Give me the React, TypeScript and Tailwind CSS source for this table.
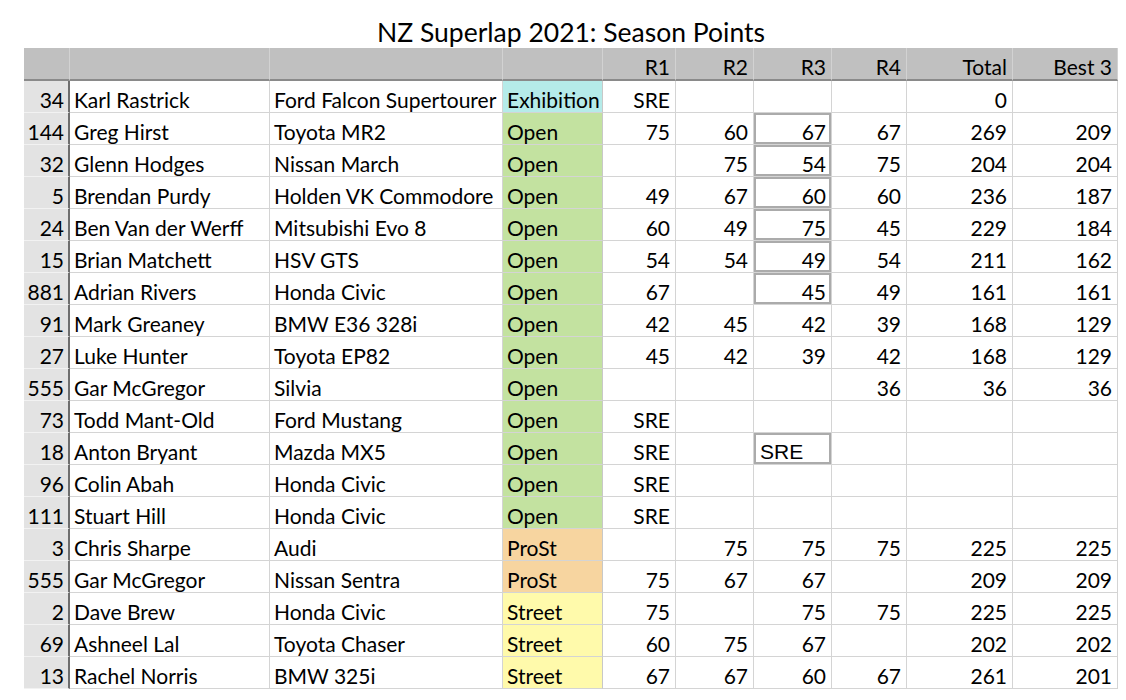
import React from "react";

type Row = {
  no: string;
  name: string;
  car: string;
  cls: "Exhibition" | "Open" | "ProSt" | "Street";
  r: string[];
  total: string;
  best: string;
};

const ROWS: Row[] = [
  { no: "34", name: "Karl Rastrick", car: "Ford Falcon Supertourer", cls: "Exhibition", r: ["SRE", "", "", ""], total: "0", best: "" },
  { no: "144", name: "Greg Hirst", car: "Toyota MR2", cls: "Open", r: ["75", "60", "67", "67"], total: "269", best: "209" },
  { no: "32", name: "Glenn Hodges", car: "Nissan March", cls: "Open", r: ["", "75", "54", "75"], total: "204", best: "204" },
  { no: "5", name: "Brendan Purdy", car: "Holden VK Commodore", cls: "Open", r: ["49", "67", "60", "60"], total: "236", best: "187" },
  { no: "24", name: "Ben Van der Werff", car: "Mitsubishi Evo 8", cls: "Open", r: ["60", "49", "75", "45"], total: "229", best: "184" },
  { no: "15", name: "Brian Matchett", car: "HSV GTS", cls: "Open", r: ["54", "54", "49", "54"], total: "211", best: "162" },
  { no: "881", name: "Adrian Rivers", car: "Honda Civic", cls: "Open", r: ["67", "", "45", "49"], total: "161", best: "161" },
  { no: "91", name: "Mark Greaney", car: "BMW E36 328i", cls: "Open", r: ["42", "45", "42", "39"], total: "168", best: "129" },
  { no: "27", name: "Luke Hunter", car: "Toyota EP82", cls: "Open", r: ["45", "42", "39", "42"], total: "168", best: "129" },
  { no: "555", name: "Gar McGregor", car: "Silvia", cls: "Open", r: ["", "", "", "36"], total: "36", best: "36" },
  { no: "73", name: "Todd Mant-Old", car: "Ford Mustang", cls: "Open", r: ["SRE", "", "", ""], total: "", best: "" },
  { no: "18", name: "Anton Bryant", car: "Mazda MX5", cls: "Open", r: ["SRE", "", "SRE", ""], total: "", best: "" },
  { no: "96", name: "Colin Abah", car: "Honda Civic", cls: "Open", r: ["SRE", "", "", ""], total: "", best: "" },
  { no: "111", name: "Stuart Hill", car: "Honda Civic", cls: "Open", r: ["SRE", "", "", ""], total: "", best: "" },
  { no: "3", name: "Chris Sharpe", car: "Audi", cls: "ProSt", r: ["", "75", "75", "75"], total: "225", best: "225" },
  { no: "555", name: "Gar McGregor", car: "Nissan Sentra", cls: "ProSt", r: ["75", "67", "67", ""], total: "209", best: "209" },
  { no: "2", name: "Dave Brew", car: "Honda Civic", cls: "Street", r: ["75", "", "75", "75"], total: "225", best: "225" },
  { no: "69", name: "Ashneel Lal", car: "Toyota Chaser", cls: "Street", r: ["60", "75", "67", ""], total: "202", best: "202" },
  { no: "13", name: "Rachel Norris", car: "BMW 325i", cls: "Street", r: ["67", "67", "60", "67"], total: "261", best: "201" },
];

const CLASS_BG: Record<Row["cls"], string> = {
  Exhibition: "bg-[#b5ebe9]",
  Open: "bg-[#c3e2a0]",
  ProSt: "bg-[#f7d5a0]",
  Street: "bg-[#fffaab]",
};

const cell = "h-[32px] flex items-end pb-[2px] border-b border-r border-[#d4d4d4] overflow-hidden whitespace-nowrap";

export default function App() {
  return (
    <div className="w-[1126px] h-[700px] bg-white text-black font-['Lato',sans-serif] text-[21px] leading-[20px]">
      {/* title */}
      <div className="h-[48px] w-[1094px] ml-[24px] flex items-end justify-center pb-[3px]">
        <h1 className="text-[26.5px] leading-[26px]">NZ Superlap 2021: Season Points</h1>
      </div>

      {/* sheet */}
      <div className="ml-[24px] w-[1094px] grid grid-cols-[46px_200px_233px_100px_73px_78px_78px_75px_106px_105px]">
        {/* header */}
        {["", "", "", "", "R1", "R2", "R3", "R4", "Total", "Best 3"].map((h, i) => (
          <div
            key={i}
            className="h-[33px] flex items-end justify-end pb-[2px] pr-[5px] bg-[#c0c0c0] border-b-2 border-b-[#8a8a8a] border-r border-r-[#d2d2d2]"
          >
            {h}
          </div>
        ))}

        {ROWS.map((row, idx) => (
          <React.Fragment key={idx}>
            <div className={`${cell} justify-end pr-[4px] bg-[#e3e3e3] border-b-[#f2f2f2] border-r-2 border-r-[#6e6e6e]`}>{row.no}</div>
            <div className={`${cell} pl-[4px]`}>{row.name}</div>
            <div className={`${cell} pl-[4px]`}>{row.car}</div>
            <div className={`${cell} pl-[4px] ${CLASS_BG[row.cls]} border-r-[#c8c8c8]`}>{row.cls}</div>
            {row.r.map((v, j) => {
              const boxed = j === 2 && idx >= 1 && idx <= 6;
              const anton = j === 2 && idx === 11;
              if (anton) {
                return (
                  <div key={j} className={`${cell} pl-[6px] font-['Liberation_Sans',sans-serif] shadow-[inset_0_0_0_2px_#ababab]`}>
                    {v}
                  </div>
                );
              }
              return (
                <div key={j} className={`${cell} justify-end pr-[5px] ${boxed ? "shadow-[inset_0_0_0_2px_#ababab]" : ""}`}>
                  {v}
                </div>
              );
            })}
            <div className={`${cell} justify-end pr-[5px]`}>{row.total}</div>
            <div className={`${cell} justify-end pr-[5px]`}>{row.best}</div>
          </React.Fragment>
        ))}
      </div>
    </div>
  );
}
